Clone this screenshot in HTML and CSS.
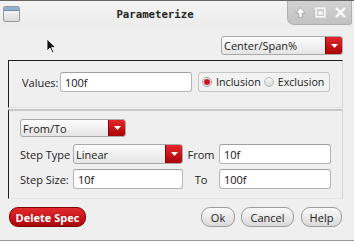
FILE: index.html
```html
<!DOCTYPE html>
<html>
<head>
<meta charset="utf-8">
<link rel="stylesheet" href="styles.css">
</head>
<body>
<div class="window">
  <div class="titlebar">
    <div class="winicon"><div class="winicon-band"></div></div>
    <div class="title">Parameterize</div>
    <div class="controls">
      <svg width="13" height="13" viewBox="0 0 12 12"><path d="M6 1.5 L10.5 6.5 H7.6 V10.5 H4.4 V6.5 H1.5 Z" fill="#fafafa" stroke="#9a9a9a" stroke-width="0.7"/></svg>
      <svg width="13" height="13" viewBox="0 0 12 12"><rect x="2" y="2" width="8" height="8" fill="none" stroke="#fafafa" stroke-width="1.4"/><rect x="4" y="5" width="4" height="3" fill="#fafafa"/></svg>
      <svg width="13" height="13" viewBox="0 0 12 12"><path d="M2.5 2.5 L9.5 9.5 M9.5 2.5 L2.5 9.5" stroke="#fafafa" stroke-width="2.2" stroke-linecap="round"/></svg>
    </div>
  </div>
  <svg class="cursor" width="11" height="16" viewBox="0 0 11 16"><path d="M1 1 V13 L4 10 L6.5 15 L8 14.3 L5.6 9.4 H9.6 Z" fill="#111" stroke="#fff" stroke-width="0.8"/></svg>
  <div class="toprow">
    <div class="combo combo-mode"><span class="combo-text">Center/Span%</span><span class="arrow"><svg width="7" height="4" viewBox="0 0 7 4"><path d="M0 0 H7 L3.5 4 Z" fill="#fff"/></svg></span></div>
  </div>
  <div class="frame frame-values">
    <span class="lbl lbl-values">Values:</span>
    <div class="field field-values">100f</div>
    <div class="radiogroup">
      <span class="radio radio-on"><span class="dot"></span></span><span class="rlabel">Inclusion</span>
      <span class="radio radio-off"></span><span class="rlabel">Exclusion</span>
    </div>
  </div>
  <div class="frame frame-range">
    <div class="combo combo-fromto"><span class="combo-text">From/To</span><span class="arrow"><svg width="7" height="4" viewBox="0 0 7 4"><path d="M0 0 H7 L3.5 4 Z" fill="#fff"/></svg></span></div>
    <div class="grid">
      <span class="lbl">Step Type</span>
      <div class="combo"><span class="combo-text">Linear</span><span class="arrow"><svg width="7" height="4" viewBox="0 0 7 4"><path d="M0 0 H7 L3.5 4 Z" fill="#fff"/></svg></span></div>
      <span class="lbl lbl-center">From</span>
      <div class="field">10f</div>
      <span class="lbl">Step Size:</span>
      <div class="field">10f</div>
      <span class="lbl lbl-center">To</span>
      <div class="field">100f</div>
    </div>
  </div>
  <div class="footer">
    <button class="btn btn-delete">Delete Spec</button>
    <div class="btns">
      <button class="btn btn-ok">Ok</button>
      <button class="btn btn-cancel">Cancel</button>
      <button class="btn btn-help">Help</button>
    </div>
  </div>
</div>
</body>
</html>
```
FILE: styles.css
```css
html, body {
  margin: 0;
  padding: 0;
}
body {
  width: 354px;
  height: 241px;
  overflow: hidden;
  background: #efefef;
  font-family: "Open Sans", "DejaVu Sans", sans-serif;
  font-size: 11px;
  color: #222;
}
.window {
  position: relative;
  height: 241px;
  box-sizing: border-box;
  border-top: 1px solid #666;
  border-bottom: 1px solid #9a9a9a;
}
.titlebar {
  display: flex;
  align-items: center;
  height: 26px;
  padding-left: 3px;
  background: linear-gradient(#f4f4f4, #ececec);
}
.winicon {
  width: 17px;
  height: 16px;
  box-sizing: border-box;
  border: 1px solid #9a9a9a;
  border-radius: 2px;
  background: linear-gradient(#fbfbfb, #dcdcdc);
  overflow: hidden;
}
.winicon-band {
  height: 3px;
  background: #8fb0d0;
  border-bottom: 1px solid #6e8fb0;
}
.title {
  flex: 1;
  text-align: center;
  font-family: "DejaVu Sans Mono", monospace;
  font-weight: bold;
  font-size: 10.7px;
  color: #262626;
  padding-left: 3px;
}
.controls {
  align-self: flex-start;
  width: 65px;
  height: 24px;
  margin-right: 2px;
  box-sizing: border-box;
  display: flex;
  align-items: center;
  gap: 7px;
  padding: 0 0 0 6px;
  background: linear-gradient(#d2d2d2, #c2c2c2);
  border: 1px solid #b0b0b0;
  border-top: none;
  border-radius: 0 0 3px 7px;
}
.cursor {
  position: absolute;
  left: 46px;
  top: 37px;
}
.toprow {
  display: flex;
  justify-content: flex-end;
  padding: 9px 11px 0 0;
  height: 19px;
  margin-bottom: 5px;
}
.combo {
  display: flex;
  align-items: stretch;
  box-sizing: border-box;
  height: 20px;
  border: 1px solid #a9a9a9;
  border-radius: 3px;
  background: linear-gradient(#fdfdfd, #e4e4e4);
  overflow: hidden;
}
.combo-text {
  flex: 1;
  display: flex;
  align-items: center;
  padding-left: 2px;
  color: #222;
}
.arrow {
  width: 16px;
  display: flex;
  align-items: center;
  justify-content: center;
  background: linear-gradient(#e5262a, #a80408);
  border-left: 1px solid #8a0004;
}
.combo-mode {
  width: 122px;
  height: 19px;
}
.frame {
  margin: 0 11px 0 8px;
  border-left: 1px solid #1e1e1e;
  border-right: 1px solid #d4d4d4;
}
.frame-values {
  display: flex;
  align-items: center;
  height: 20px;
  padding: 11px 0 15px 13px;
  border-top: 1px solid #1e1e1e;
  border-bottom: 1px solid #e2e2e2;
}
.lbl {
  display: flex;
  align-items: center;
  white-space: nowrap;
  color: #222;
}
.lbl-values {
  width: 38px;
}
.field {
  box-sizing: border-box;
  height: 20px;
  display: flex;
  align-items: center;
  padding-left: 4px;
  background: #fff;
  border: 1px solid #b4b4b4;
  border-top-color: #a0a0a0;
  border-radius: 3px;
  color: #111;
}
.field-values {
  width: 132px;
  margin-right: 6px;
}
.radiogroup {
  box-sizing: border-box;
  width: 132px;
  height: 20px;
  display: flex;
  align-items: center;
  padding-left: 3px;
  border: 1px solid #c6c6c6;
  border-radius: 3px;
  background: #f2f2f2;
}
.radio {
  box-sizing: border-box;
  width: 10px;
  height: 10px;
  border-radius: 50%;
  margin-right: 4px;
  display: flex;
  align-items: center;
  justify-content: center;
}
.radio-on {
  background: #fff;
  border: 1px solid #9a9a9a;
}
.dot {
  width: 6px;
  height: 6px;
  border-radius: 50%;
  background: #d0101a;
}
.radio-off {
  background: linear-gradient(#fafafa, #d6d6d6);
  border: 1px solid #b8b8b8;
  margin-left: 3px;
}
.rlabel {
  font-size: 10.7px;
  color: #222;
}
.frame-range {
  margin-top: 1px;
  padding: 8px 0 9px 11px;
  border-top: 2px solid #c8c8c8;
  border-bottom: 1px solid #e4e4e4;
}
.combo-fromto {
  width: 106px;
  height: 18px;
  margin-bottom: 7px;
}
.grid {
  display: grid;
  grid-template-columns: 53px 110px 36px 112px;
  grid-template-rows: 20px 20px;
  row-gap: 5px;
}
.lbl-center {
  justify-content: center;
}
.footer {
  display: flex;
  justify-content: space-between;
  align-items: center;
  margin-top: 8px;
  padding: 0 12px 0 9px;
  height: 20px;
}
.btns {
  display: flex;
  gap: 6px;
}
.btn {
  box-sizing: border-box;
  height: 20px;
  padding: 0;
  font-family: "Open Sans", "DejaVu Sans", sans-serif;
  font-size: 11px;
  border-radius: 9px;
  border: 1px solid #9c9c9c;
  background: linear-gradient(#fafafa, #d9d9d9);
  color: #222;
}
.btn-delete {
  width: 77px;
  font-weight: bold;
  color: #fff;
  border: 1px solid #7e0006;
  background: linear-gradient(#e42a2e, #a8060b);
}
.btn-ok { width: 34px; }
.btn-cancel { width: 53px; }
.btn-help { width: 41px; margin-left: 1px; }
```
